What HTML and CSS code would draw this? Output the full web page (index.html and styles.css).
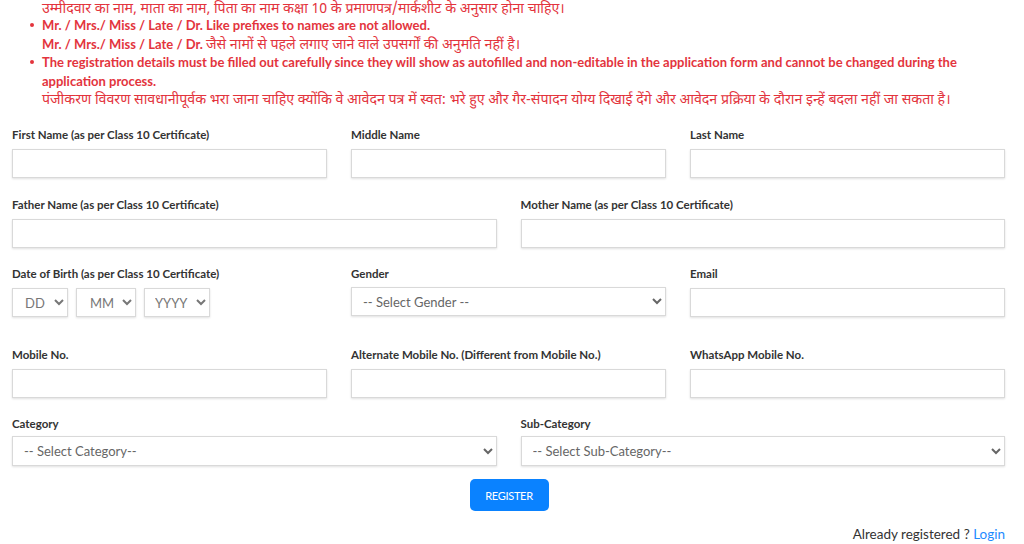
FILE: index.html
```html
<!DOCTYPE html>
<html lang="hi">
<head>
<meta charset="utf-8">
<title>Registration</title>
<link rel="stylesheet" href="styles.css">
</head>
<body>
<div class="page">
  <ul class="notes">
    <li class="cont"><span class="ln hi">उम्मीदवार का नाम, माता का नाम, पिता का नाम कक्षा 10 के प्रमाणपत्र/मार्कशीट के अनुसार होना चाहिए।</span></li>
    <li><span class="ln">Mr. / Mrs./ Miss / Late / Dr. Like prefixes to names are not allowed.</span><span class="ln">Mr. / Mrs./ Miss / Late / Dr. <span class="hi">जैसे नामों से पहले लगाए जाने वाले उपसर्गों की अनुमति नहीं है।</span></span></li>
    <li><span class="ln">The registration details must be filled out carefully since they will show as autofilled and non-editable in the application form and cannot be changed during the</span><span class="ln">application process.</span><span class="ln hi">पंजीकरण विवरण सावधानीपूर्वक भरा जाना चाहिए क्योंकि वे आवेदन पत्र में स्वत: भरे हुए और गैर-संपादन योग्य दिखाई देंगे और आवेदन प्रक्रिया के दौरान इन्हें बदला नहीं जा सकता है।</span></li>
  </ul>

  <form class="form">
    <div class="row three r1">
      <div class="field"><label>First Name (as per Class 10 Certificate)</label><input type="text"></div>
      <div class="field"><label>Middle Name</label><input type="text"></div>
      <div class="field"><label>Last Name</label><input type="text"></div>
    </div>
    <div class="row two r2">
      <div class="field"><label>Father Name (as per Class 10 Certificate)</label><input type="text"></div>
      <div class="field"><label>Mother Name (as per Class 10 Certificate)</label><input type="text"></div>
    </div>
    <div class="row three r3">
      <div class="field"><label>Date of Birth (as per Class 10 Certificate)</label>
        <div class="dob">
          <select class="dd"><option>DD</option></select>
          <select class="mm"><option>MM</option></select>
          <select class="yy"><option>YYYY</option></select>
        </div>
      </div>
      <div class="field gender"><label>Gender</label><select><option>-- Select Gender --</option></select></div>
      <div class="field"><label>Email</label><input type="email"></div>
    </div>
    <div class="row three r4">
      <div class="field"><label>Mobile No.</label><input type="text"></div>
      <div class="field"><label>Alternate Mobile No. (Different from Mobile No.)</label><input type="text"></div>
      <div class="field"><label>WhatsApp Mobile No.</label><input type="text"></div>
    </div>
    <div class="row two r5">
      <div class="field"><label>Category</label><select><option>-- Select Category--</option></select></div>
      <div class="field"><label>Sub-Category</label><select><option>-- Select Sub-Category--</option></select></div>
    </div>
    <div class="actions"><button type="button" class="btn">REGISTER</button></div>
    <p class="login">Already registered ? <a href="#">Login</a></p>
  </form>
</div>
</body>
</html>
```

FILE: styles.css
```css
* { box-sizing: border-box; }
html, body { margin: 0; padding: 0; background: #fff; }
body {
  font-family: "Lato", "Noto Sans", "Noto Sans Devanagari", sans-serif;
  color: #333;
  overflow: hidden;
}
.page { width: 1017px; }

.notes {
  margin: -2px 0 0 0;
  padding: 0 12px 0 42px;
  color: #e3343d;
  font-size: 13px;
  font-weight: 700;
}
.notes li { list-style: none; position: relative; }
.notes .ln {
  display: block;
  height: 18.4px;
  line-height: 18.4px;
  white-space: nowrap;
}
.notes .ln.hi { padding-top: 2.5px; }
.notes li::before {
  content: "";
  position: absolute;
  left: -12px;
  top: 7px;
  width: 4px;
  height: 4px;
  border-radius: 50%;
  background: #e3343d;
}
.notes li.cont::before { display: none; }
.hi {
  font-family: "Noto Sans Devanagari", "Lohit Devanagari", "Noto Sans", sans-serif;
  font-weight: 400;
  font-size: 14.2px;
}

.form { padding: 0 12px; margin-top: 18px; }
.row { display: grid; column-gap: 24px; }
.row.three { grid-template-columns: repeat(3, 1fr); }
.row.two { grid-template-columns: repeat(2, 1fr); }
.r1 { margin-bottom: 18px; }
.r2 { margin-bottom: 17px; }
.r3 { margin-bottom: 29px; }
.r4 { margin-bottom: 17px; }
.r5 { margin-bottom: 13px; }
.r5 label { margin-bottom: 4px; }

.field { display: flex; flex-direction: column; }
label {
  display: block;
  font-size: 11.5px;
  font-weight: 700;
  line-height: 16px;
  color: #333;
  padding-top: 1px;
  margin-bottom: 6px;
  white-space: nowrap;
}
input, select {
  height: 29px;
  border: 1px solid #d9d9d9;
  background: #fff;
  box-shadow: 0 1px 2px rgba(0,0,0,0.12);
  font-family: "Lato", "Noto Sans", sans-serif;
  font-size: 13px;
  color: #666;
  padding: 0 10px;
  border-radius: 0;
  width: 100%;
}
select { padding: 0 10px 0 7px; }
.r5 select { height: 30px; }
.gender select { margin-top: -1px; }

.dob { display: flex; gap: 8px; }
.dob select { width: auto; color: #777; padding: 0 0 0 8px; }
.dob .dd { width: 56px; }
.dob .mm { width: 60px; padding-left: 9px; }
.dob .yy { width: 66px; padding-left: 6px; }

.actions { display: flex; justify-content: center; }
.btn {
  width: 79px;
  height: 32px;
  background: #0a82ff;
  color: #fff;
  border: 0;
  border-radius: 5px;
  font-family: "Lato", "Noto Sans", sans-serif;
  font-size: 11px;
  letter-spacing: -0.3px;
  padding: 0;
  margin-left: 1px;
}
.login {
  margin: 15px 0 0 0;
  text-align: right;
  font-size: 13.5px;
  line-height: 16px;
  color: #333;
}
.login a { color: #1f8bff; text-decoration: none; }
```
